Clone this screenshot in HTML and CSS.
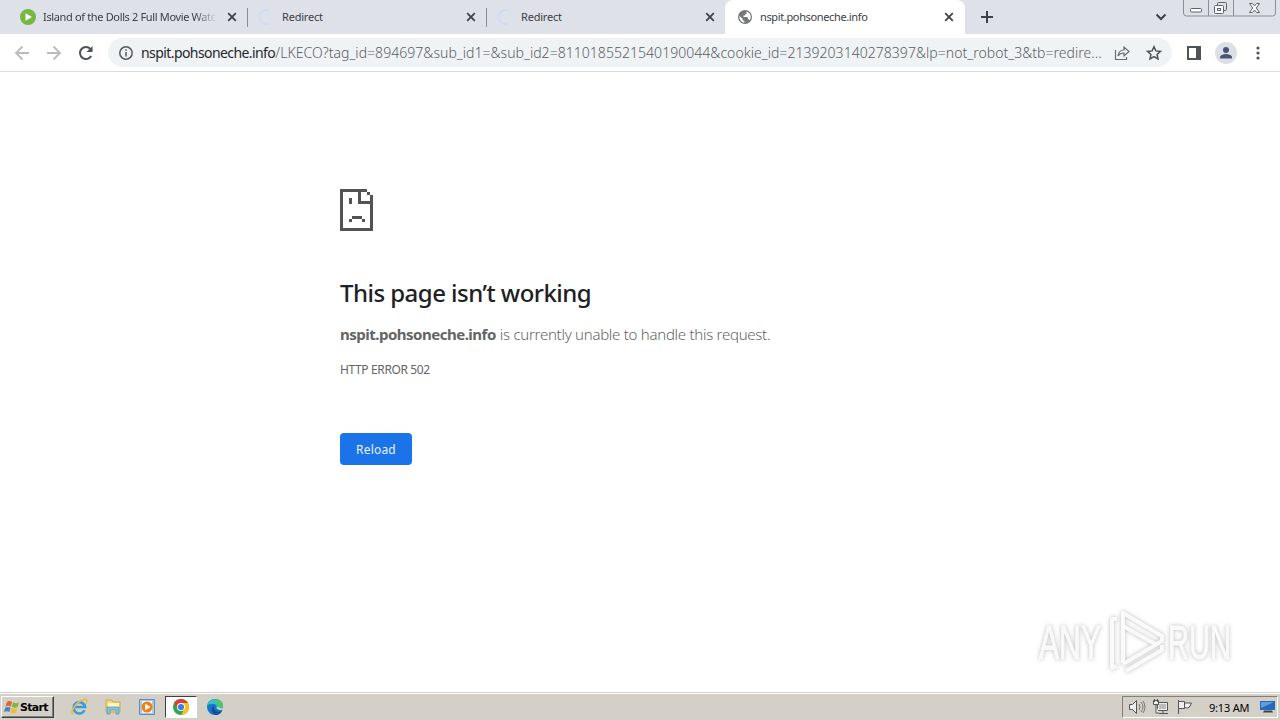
FILE: index.html
```html
<!DOCTYPE html>
<html lang="en">
<head>
  <meta charset="UTF-8" />
  <meta name="viewport" content="width=device-width, initial-scale=1.0" />
  <title>nspit.pohsoneche.info</title>
  <link rel="stylesheet" href="styles.css">
</head>
<body>
  <div class="tabstrip">
    <div class="tab tab-first">
      <svg class="favicon" viewBox="0 0 16 16"><circle cx="8" cy="8" r="8" fill="#76b843"/><path d="M5.5 4.2v7.6L12 8z" fill="#fff"/></svg>
      <span class="tab-title fade">Island of the Dolls 2 Full Movie Watc</span>
      <svg class="close" viewBox="0 0 10 10"><path d="M1.2 1.2l7.6 7.6M8.8 1.2L1.2 8.8"/></svg>
    </div>
    <div class="tab">
      <svg class="favicon" viewBox="0 0 16 16"><path d="M11 1.5A7 7 0 1 0 11 14.5" fill="none" stroke="#cfdcf3" stroke-width="2"/></svg>
      <span class="tab-title">Redirect</span>
      <svg class="close" viewBox="0 0 10 10"><path d="M1.2 1.2l7.6 7.6M8.8 1.2L1.2 8.8"/></svg>
    </div>
    <div class="tab tab-last">
      <svg class="favicon" viewBox="0 0 16 16"><path d="M11 1.5A7 7 0 1 0 11 14.5" fill="none" stroke="#cfdcf3" stroke-width="2"/></svg>
      <span class="tab-title">Redirect</span>
      <svg class="close" viewBox="0 0 10 10"><path d="M1.2 1.2l7.6 7.6M8.8 1.2L1.2 8.8"/></svg>
    </div>
    <div class="tab active">
      <svg class="favicon globe" viewBox="0 0 14 14"><circle cx="7" cy="7" r="7" fill="#75787c"/><path d="M1.4 6l3.3 3v1.3l1.7 1v1.4C3.3 12.3 1 9.5 1.4 6zM8.5 1.6C11 2.2 12.8 4.500 12.7 7c0 1.2-.5 2.4-1.1 3.2L10.8 9.3H10V7.5L9 7H5.500V5.6H7V4.3h1.5z" fill="#fff"/></svg>
      <span class="tab-title host">nspit.pohsoneche.info</span>
      <svg class="close" viewBox="0 0 10 10"><path d="M1.2 1.2l7.6 7.6M8.8 1.2L1.2 8.8"/></svg>
    </div>
    <svg class="new-tab" viewBox="0 0 12 12"><path d="M6 0v12M0 6h12"/></svg>
    <svg class="tab-search" viewBox="0 0 12 8"><path d="M1.5 1.5L6 6l4.5-4.5"/></svg>
    <div class="window-controls">
      <svg viewBox="0 0 97 17" fill="none">
        <path d="M.5 0v13a3 3 0 0 0 3 3h86a3 3 0 0 0 3-3V0M25.5 0v16M50.500 0v16" stroke="#8b8f98"/>
        <rect x="7.500" y="8.500" width="11" height="3.500" rx="1" fill="#fff" stroke="#5d626c"/>
        <path d="M34.500 5.500V3.500q0-1 1-1h7q1 0 1 1v6q0 1-1 1h-2" stroke="#5d626c"/>
        <rect x="31.500" y="5.500" width="9" height="8" rx="1" fill="#fff" stroke="#5d626c"/>
        <rect x="34.500" y="8.500" width="3" height="2" stroke="#5d626c"/>
        <path d="M66.500 3.500h3l2 2.500 2-2.500h3L73.300 8l3.200 4.500h-3l-2-2.500-2 2.500h-3L69.700 8z" fill="#fff" stroke="#5d626c"/>
      </svg>
    </div>
  </div>

  <div class="toolbar">
    <svg class="nav" viewBox="0 0 16 16"><path d="M15 8H2M8.5 1.5L2 8l6.500 6.500" stroke="#b9bbbe"/></svg>
    <svg class="nav" viewBox="0 0 16 16"><path d="M1 8h13M7.5 1.5L14 8l-6.500 6.500" stroke="#b9bbbe"/></svg>
    <svg class="nav" viewBox="0 0 16 16"><path d="M13.2 11A6 6 0 1 1 12.4 3.900L14 5.500" stroke="#505357" stroke-width="2"/><path d="M14.500 1v6h-6z" fill="#505357" stroke="none"/></svg>
    <div class="omnibox">
      <svg class="info" viewBox="0 0 14 14"><circle cx="7" cy="7" r="6.2"/><path d="M7 6v4.500M7 3.200v1.600"/></svg>
      <span class="url"><b>nspit.pohsoneche.info</b><i>/LKECO?tag_id=894697&amp;sub_id1=&amp;sub_id2=8110185521540190044&amp;cookie_id=2139203140278397&amp;lp=not_robot_3&amp;tb=redire...</i></span>
      <svg class="share" viewBox="0 0 16 16"><path d="M1.5 5v9.500h11V12M4 11c.5-4 2.500-6 6-6V2l5 4.500-5 4.500V8c-3 0-4.500.7-6 3z"/></svg>
      <svg class="star" viewBox="0 0 16 16"><path d="M8 1.700l1.900 4.200 4.600.5-3.400 3.100.9 4.500L8 11.700 4 14l.9-4.500L1.500 6.400l4.600-.5z"/></svg>
    </div>
    <svg class="panel" viewBox="0 0 14 14"><path d="M1 1h12v12H1z" fill="none" stroke="#505357" stroke-width="2"/><path d="M9 1h4v12H9z" fill="#505357"/></svg>
    <svg class="avatar" viewBox="0 0 22 22"><circle cx="11" cy="11" r="11" fill="#dce0e6"/><circle cx="11" cy="8" r="3" fill="#475672"/><path d="M5 16.500v-1.300C5 13 9 12 11 12s6 1 6 3.200v1.300z" fill="#475672"/></svg>
    <svg class="menu" viewBox="0 0 4 14"><circle cx="2" cy="2" r="1.600"/><circle cx="2" cy="7" r="1.600"/><circle cx="2" cy="12" r="1.600"/></svg>
  </div>

  <main class="page">
    <svg class="sad" viewBox="0 0 33 42" shape-rendering="crispEdges"><path fill="#535353" d="M0 0h27v3H3v36h27V15H18V3h3v9h9V6h3v36H0zM27 3h3v3h-3zM9 9h3v6H9zM12 27h10v3H12zM9 30h3v3H9zM22 30h3v3h-3z"/></svg>
    <h1>This page isn’t working</h1>
    <p class="summary"><strong>nspit.pohsoneche.info</strong> <span>is currently unable to handle this request.</span></p>
    <div class="error-code">HTTP ERROR 502</div>
    <button class="reload">Reload</button>
    <svg class="watermark" viewBox="0 0 210 70">
      <text x="9" y="52" textLength="62" lengthAdjust="spacingAndGlyphs">ANY</text>
      <text x="138" y="52" textLength="63" lengthAdjust="spacingAndGlyphs">RUN</text>
      <path d="M87 12h-5v49l5-2M93 56V6l39 23v5L93 57M93 19l34 19M96 64l36-21v-5"/>
    </svg>
  </main>

  <div class="taskbar">
    <div class="start">
      <svg viewBox="0 0 16 16"><path d="M3 3q2-2 5 0L6.800 7.500Q4 6 1.500 7.500z" fill="#e8622c"/><path d="M9 3.200q3 2 6 .3L13.500 8q-3 1.500-5.700-.3z" fill="#7cb83b"/><path d="M1.200 8.700q2.500-1.500 5.300 0L5.300 13Q3 11.500 0 13z" fill="#3d83d0"/><path d="M7.500 9q3 1.500 5.700.2L12 13.700q-3 1.300-5.800-.4z" fill="#f3bd30"/></svg>
      <span>Start</span>
    </div>
    <div class="task">
      <svg viewBox="0 0 18 18"><path d="M14.500 12.300A5.700 5.700 0 1 1 15 9H5" fill="none" stroke="#3a9bdc" stroke-width="2.600"/><path d="M3.500 16.500C-1 16 5 4 14 1.500c4-1 3 2.500 2 4" fill="none" stroke="#edbb3c" stroke-width="1.500"/></svg>
    </div>
    <div class="task">
      <svg viewBox="0 0 18 18"><path d="M2 2h6l1 2h7v10H2z" fill="#f3d878" stroke="#d0aa48"/><path d="M4 5h11v4H4z" fill="#fff5bd"/><path d="M3 16V9h12v7h-3v-4H6v4z" fill="#83c3df" stroke="#5297b8" stroke-width=".7"/></svg>
    </div>
    <div class="task">
      <svg viewBox="0 0 18 18"><path d="M1.500 1.500h15v15h-15z" fill="#a9cbe6" stroke="#5790bd"/><path d="M4 3h10v12H4z" fill="#eef5fa"/><circle cx="9" cy="9" r="5.500" fill="#f08213"/><path d="M7.200 5.700v6.600L12.500 9z" fill="#fff"/></svg>
    </div>
    <div class="task pressed">
      <svg viewBox="0 0 18 18"><circle cx="9" cy="9" r="8" fill="#32a350"/><path d="M9 9L2.070 5A8 8 0 0 1 15.930 5H9z" fill="#df4130"/><path d="M9 5h6.930A8 8 0 0 1 9 17l3.460-6z" fill="#fbc116"/><path d="M2.070 5L5.500 11 9 9z" fill="#df4130"/><circle cx="9" cy="9" r="4" fill="#fff"/><circle cx="9" cy="9" r="3.100" fill="#3c7de6"/></svg>
    </div>
    <div class="task">
      <svg viewBox="0 0 18 18"><circle cx="9" cy="9" r="8" fill="#1478c8"/><path d="M1.300 7C4-1 16-.5 17 7.500c.2 3-2.500 4.500-6 3.500 1-3-1-5-4-5-2.500 0-4 .5-5.700 1z" fill="#37bfc6"/><path d="M11 1.500c4 .5 6 3 6 6.500-.5 2-3 3-5.500 2.500C13 7 12 5 8 4z" fill="#4dc66c"/><path d="M8 7.500c-1 5 4 7.500 8 5.500-1 2.500-4 4-6 4-5-1-6-7-2-9.500z" fill="#124f9c"/><path d="M10.500 8.500c-.5 3 3 4 6.500 3l1.500 1V10l-4 .3z" fill="#d4d0c8"/></svg>
    </div>
    <div class="tray">
      <svg class="sound" viewBox="0 0 18 16"><path d="M1.500 5.500h3l4-4v13l-4-4h-3z"/><path d="M11 5q2 3 0 6M13 3q4 5 0 10M15 2q4 6 0 12" fill="none" stroke="#777"/></svg>
      <svg class="network" viewBox="0 0 18 16"><path d="M5.500 3.500h10v8h-10zM7 14.500h9M11 12v2" /><path d="M7 5h7v5H7z" fill="#bbb" stroke="none"/><path d="M1.500 1.500h5v4h-5zM2.500 0v3M5.500 0v3M4 6v8h3"/></svg>
      <svg class="flag" viewBox="0 0 18 16"><path d="M2.500 1v14"/><path d="M2.500 2.500h6v7h-6zM8.500 4h7l-2 4q-2 2-5 .5z"/></svg>
      <span class="clock">9:13 AM</span>
      <svg class="desktop" viewBox="0 0 16 14"><path d="M0 1h15v9H0z" fill="#2967b8"/><path d="M1 2h13L1 8z" fill="#5aa0e2"/><path d="M4 10.500h8l1 2H3z" fill="#35424f"/></svg>
    </div>
  </div>
</body>
</html>
```
FILE: styles.css
```css
* { box-sizing: border-box; }
body { margin: 0; width: 1280px; height: 720px; overflow: hidden; display: flex; flex-direction: column; background: #fff; font-family: "Noto Sans", sans-serif; }
svg { display: block; flex: none; }

.tabstrip { height: 34px; flex: none; display: flex; align-items: center; background: #dee1e8; }
.tab { width: 239px; height: 34px; display: flex; align-items: center; padding: 0 11px 0 10px; position: relative; }
.tab-first { width: 248px; padding-left: 20px; }
.tab-last { width: 238px; padding-right: 10px; }
.tab:not(.active)::after { content: ""; position: absolute; right: 0; top: 8px; width: 1px; height: 19px; background: #888c94; }
.tab-last::after { display: none; }
.tab.active { width: 240px; background: #fff; border-radius: 8px 8px 0 0; padding: 0 11px 0 13px; }
.favicon { width: 16px; height: 16px; }
.globe { width: 14px; height: 14px; }
.tab-title { flex: 1; margin-left: 8px; font-size: 11px; line-height: 16px; letter-spacing: -0.2px; color: #3b3e43; white-space: nowrap; }
.tab-title.fade { flex: none; width: 175px; margin-left: 7px; margin-right: 9px; letter-spacing: -0.35px; -webkit-mask-image: linear-gradient(to right, #000 86%, transparent); mask-image: linear-gradient(to right, #000 86%, transparent); }
.tab-title.host { letter-spacing: -0.36px; }
.close { width: 10px; height: 10px; stroke: #3f4247; stroke-width: 1.8; fill: none; }
.new-tab { width: 12px; height: 12px; margin-left: 16px; stroke: #3f4247; stroke-width: 2; }
.tab-search { width: 12px; height: 8px; margin-left: 162px; stroke: #3f4247; stroke-width: 2; fill: none; }
.window-controls { width: 97px; height: 34px; margin-left: auto; }
.window-controls svg { width: 97px; height: 17px; }

.toolbar { height: 38px; flex: none; display: flex; align-items: center; padding-left: 14px; border-bottom: 1px solid #dadce0; }
.nav { width: 16px; height: 16px; margin-right: 16px; fill: none; stroke-width: 1.8; }
.omnibox { width: 1064px; height: 29px; margin-left: -2px; padding-left: 11px; display: flex; align-items: center; border-radius: 15px; background: #f0f3f5; }
.info { width: 14px; height: 14px; fill: none; stroke: #56595e; stroke-width: 1.5; }
.url { width: 962px; margin-left: 8px; font-size: 14px; line-height: 20px; white-space: nowrap; display: flex; }
.url b { font-weight: 400; color: #25272a; letter-spacing: -0.58px; }
.url i { font-style: normal; font-weight: 300; color: #5a5e63; letter-spacing: 0.04px; }
.share { width: 16px; height: 16px; margin-left: 11px; fill: none; stroke: #686b70; stroke-width: 1.2; }
.star { width: 16px; height: 16px; margin-left: 16px; fill: none; stroke: #505357; stroke-width: 1.5; }
.panel { width: 14px; height: 14px; margin-left: 15px; }
.avatar { width: 22px; height: 22px; margin-left: 14px; }
.menu { width: 4px; height: 14px; margin-left: 19px; fill: #505357; }

.page { flex: 1; padding: 117px 0 0 340px; position: relative; color: #646464; }
.sad { width: 33px; height: 42px; }
h1 { margin: 45px 0 0; font-size: 24px; line-height: 34px; font-weight: 500; letter-spacing: -0.53px; color: #202124; white-space: nowrap; }
.summary { margin: 13px 0 0; font-size: 15px; line-height: 22px; white-space: nowrap; display: flex; gap: 4px; }
.summary strong { letter-spacing: -0.5px; }
.summary span { font-weight: 300; letter-spacing: -0.27px; }
.error-code { margin-top: 16px; font-size: 12px; line-height: 18px; letter-spacing: -0.37px; width: max-content; }
.reload { display: block; width: 72px; height: 32px; margin-top: 54px; padding: 0; border: 0; border-radius: 4px; background: #1a73e8; color: #e9f2ff; font: 12px "Noto Sans", sans-serif; letter-spacing: 0.2px; }
.watermark { position: absolute; right: 40px; bottom: 15px; width: 210px; height: 70px; overflow: visible; filter: drop-shadow(0 0 2px #bbb); }
.watermark text { font: 49px "Liberation Sans", sans-serif; fill: #fafafa; stroke: #fafafa; stroke-width: 1; }
.watermark path { fill: none; stroke: #fafafa; stroke-width: 4; stroke-linejoin: round; }

.taskbar { height: 28px; flex: none; display: flex; align-items: center; padding: 2px 2px 0 1px; background: #d4d0c8; box-shadow: inset 0 1px #d4d0c8, inset 0 2px #fff; }
.start { width: 53px; height: 22px; padding-left: 2px; display: flex; align-items: center; border: 1px solid; border-color: #fff #404040 #404040 #fff; box-shadow: inset -1px -1px #808080; font: bold 11px "DejaVu Sans", sans-serif; color: #000; margin-right: 9px; }
.start svg { width: 16px; height: 16px; }
.start span { letter-spacing: -0.7px; }
.task { width: 32px; height: 22px; margin-right: 2px; display: flex; align-items: center; justify-content: center; }
.task svg { width: 18px; height: 18px; }
.pressed { background: #fff; border: 1px solid; border-color: #404040 #fff #fff #404040; }
.tray { width: 156px; height: 22px; margin-left: auto; display: flex; align-items: center; border: 1px solid; border-color: #808080 #fff #fff #808080; }
.tray svg { fill: #eee; stroke: #555; width: 18px; height: 16px; }
.sound { margin-left: 5px; }
.network, .flag { margin-left: 6px; }
.clock { width: 41px; margin-left: 15px; font: 11px "Noto Sans", sans-serif; color: #000; letter-spacing: -0.2px; white-space: nowrap; }
.tray .desktop { width: 16px; height: 14px; margin-left: 10px; stroke: none; }
```
